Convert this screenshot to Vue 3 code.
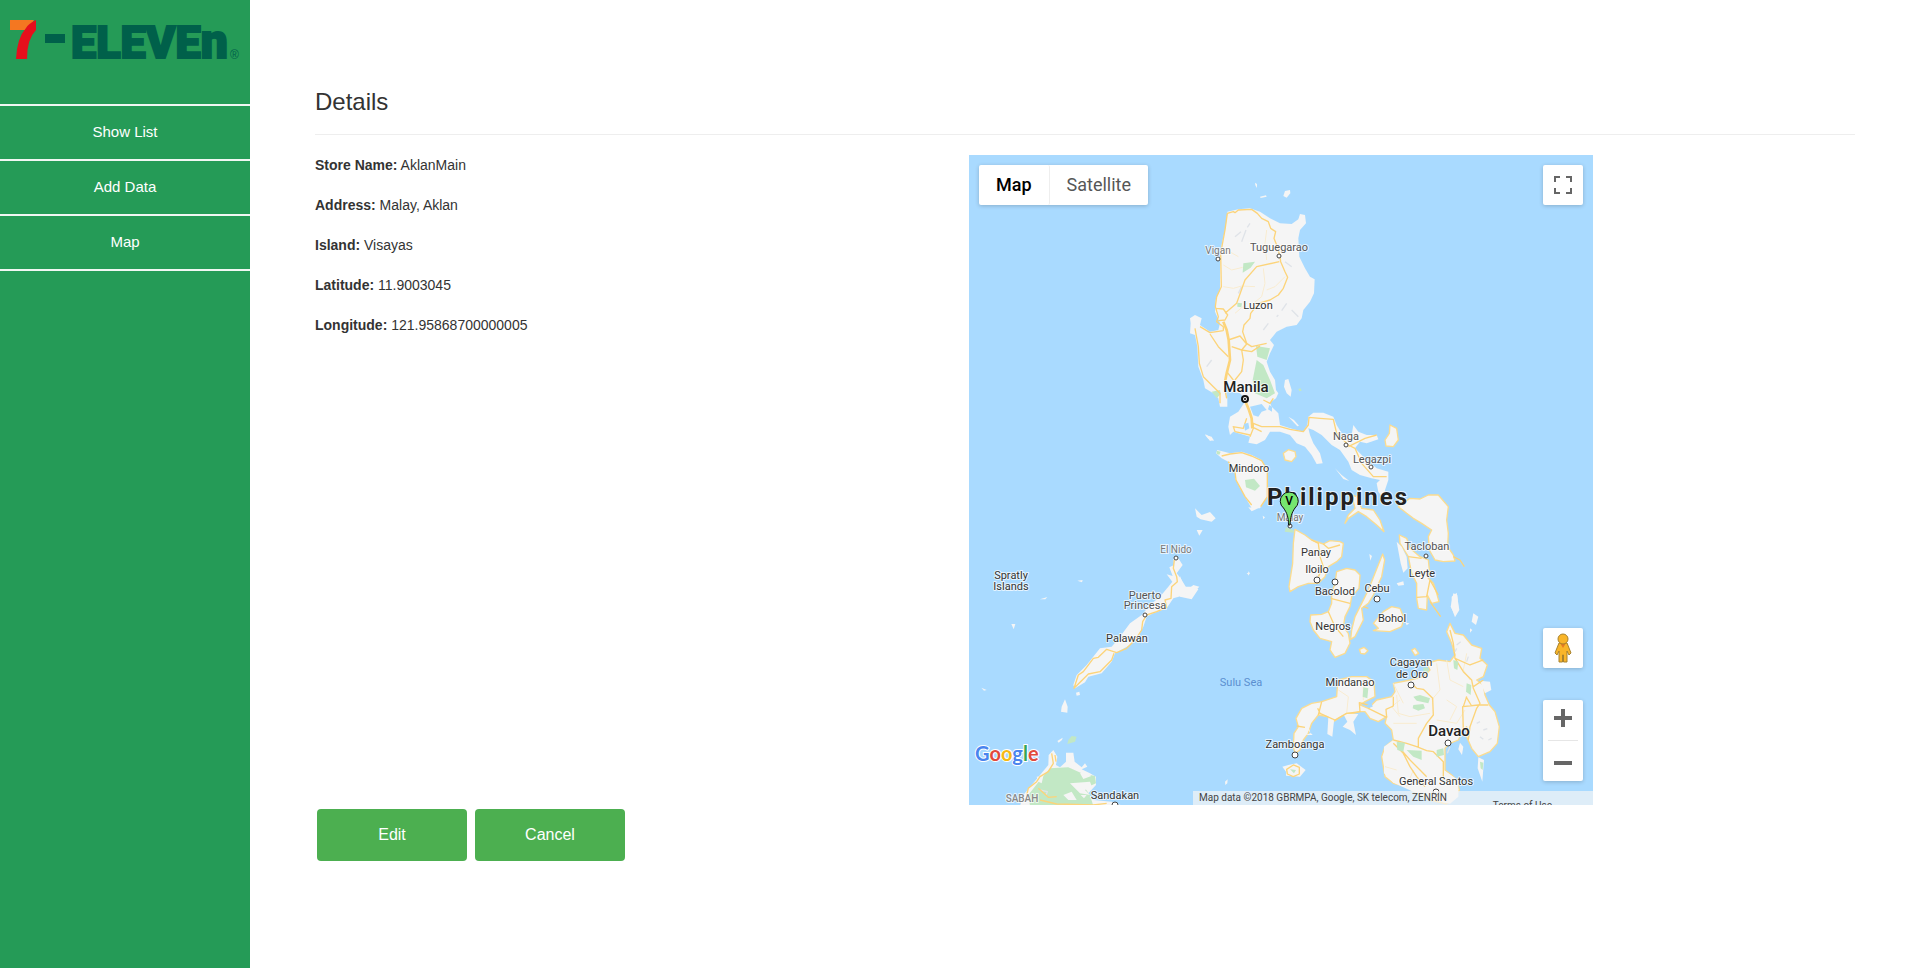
<script setup>
const nav = ['Show List', 'Add Data', 'Map']

const details = [
  ['Store Name:', 'AklanMain'],
  ['Address:', 'Malay, Aklan'],
  ['Island:', 'Visayas'],
  ['Latitude:', '11.9003045'],
  ['Longitude:', '121.95868700000005'],
]

// Place labels: text, centre x, baseline y, style
const labels = [
  ['Vigan', 249, 99, 'minor'],
  ['Tuguegarao', 310, 96, 'town'],
  ['Luzon', 289, 154, 'region'],
  ['Manila', 277, 237, 'city'],
  ['Naga', 377, 285, 'town'],
  ['Legazpi', 403, 308, 'town'],
  ['Mindoro', 280, 317, 'region'],
  ['Malay', 321, 366, 'minor'],
  ['Panay', 347, 401, 'region'],
  ['Iloilo', 348, 418, 'region'],
  ['Bacolod', 366, 440, 'region'],
  ['Cebu', 408, 437, 'region'],
  ['Tacloban', 458, 395, 'town'],
  ['Leyte', 453, 422, 'region'],
  ['Bohol', 423, 467, 'region'],
  ['Negros', 364, 475, 'region'],
  ['Cagayan', 442, 511, 'region'],
  ['de Oro', 443, 523, 'region'],
  ['Mindanao', 381, 531, 'region'],
  ['Davao', 480, 581, 'city'],
  ['Zamboanga', 326, 593, 'region'],
  ['General Santos', 467, 630, 'region'],
  ['Sulu Sea', 272, 531, 'sea'],
  ['El Nido', 207, 398, 'minor'],
  ['Spratly', 42, 424, 'region'],
  ['Islands', 42, 435, 'region'],
  ['Puerto', 176, 444, 'town'],
  ['Princesa', 176, 454, 'town'],
  ['Palawan', 158, 487, 'region'],
  ['SABAH', 53, 647, 'state'],
  ['Sandakan', 146, 644, 'region'],
]

const dots = [
  [249, 104, 2], [310, 101, 2], [377, 290, 2], [402, 312, 2], [321, 371, 2],
  [348, 425, 3], [366, 427, 3], [408, 444, 3], [457, 401, 2], [442, 530, 3],
  [479, 588, 3], [326, 600, 3], [467, 637, 3], [207, 403, 2], [176, 460, 2], [146, 650, 3],
]
</script>

<template>
  <div class="layout">
    <aside class="sidebar">
      <a class="brand" href="#" aria-label="7-Eleven">
        <svg viewBox="0 0 250 104" role="img" aria-hidden="true">
          <path d="M10 20H34L28 30H10Z" fill="#f47721" />
          <path d="M36 20V30Q27 39 27 59H16Q17 38 26 28Q28 24 36 20Z" fill="#e60f1c" />
          <rect x="45" y="34" width="20" height="9" fill="#00604a" />
          <text x="71" y="58" class="wordmark">ELEVE<tspan class="wordmark-n">n</tspan></text>
          <text x="230" y="59" class="reg">®</text>
        </svg>
      </a>
      <nav>
        <a v-for="item in nav" :key="item" href="#" class="nav-link">{{ item }}</a>
      </nav>
    </aside>

    <main class="content">
      <h3>Details</h3>
      <div class="columns">
        <section class="details">
          <p v-for="[name, value] in details" :key="name"><strong>{{ name }}</strong> {{ value }}</p>
        </section>

        <section class="map">
          <svg class="canvas" viewBox="0 0 624 650" preserveAspectRatio="xMidYMid slice" role="img" aria-label="Map of the Philippines">
            <g transform="scale(.33333)">
              <!-- Luzon -->
              <g transform="translate(603 75)">
                <path class="land" d="M172 95L205 88 240 85 270 95 300 115 330 130 365 132 385 118 390 102 405 105 408 130 390 150 385 175 388 230 405 265 420 290 434 298 432 340 420 365 400 390 395 415 380 435 350 440 320 455 300 480 312 495 305 510 300 520 290 545 300 575 315 600 318 630 325 640 318 655 300 668 305 680 325 700 330 735 360 745 400 755 412 735 415 710 430 698 460 698 490 710 500 735 515 760 545 765 550 735 565 755 590 765 620 765 625 778 590 790 570 785 555 805 590 840 620 865 655 875 655 900 645 930 640 955 625 935 620 910 630 900 605 895 570 885 545 870 535 845 510 810 485 795 470 780 455 765 430 750 415 745 420 765 430 790 450 820 458 850 440 852 425 825 405 800 380 790 360 765 330 755 300 755 285 780 260 793 235 788 240 770 190 755 180 765 175 740 180 710 205 695 215 680 228 660 210 640 185 635 175 610 165 625 172 655 172 680 150 680 145 655 130 640 105 625 100 600 85 560 82 500 75 465 60 460 62 430 60 415 75 405 95 415 90 435 120 455 145 450 150 430 135 395 137 360 150 330 150 215 165 150 170 120Z" />
                <path class="land" d="M345 33L360 30 361 40 350 53 340 48ZM270 50L288 46 290 50 272 54ZM255 8L261 12 261 24 256 16ZM345 600L355 597 365 630 362 650 350 640 342 620ZM355 710L372 720 387 737 382 739ZM105 762L120 770 131 780 120 783Z" />
                <path class="green" d="M220 250L255 245 242 263 218 278ZM258 498L300 505 290 540 262 530ZM260 540L280 555 300 600 315 640 290 655 255 640 248 600ZM125 635L150 630 152 642 140 655ZM202 368L216 370 214 382 202 380ZM385 627L392 625 395 632 388 634Z" />
                <path class="shade" d="M195 170L213 155M215 185L228 150M240 130L232 142M350 370L335 392M320 410L325 405M110 560L125 540M365 390L385 410M205 340L215 320M345 245L365 260M280 450L295 430" />
                <path class="minor-road" d="M160 320L190 325 215 318 255 320M290 150L285 190 290 240M280 265L285 310 275 350 250 370M160 255L185 270 218 262M230 370L195 400M345 290L315 320 290 330M170 210L205 230" />
                <path class="road" d="M172 100L190 95 195 98 205 90 245 88 262 100 275 115 295 125 302 145 317 155 312 175 322 200 330 230 332 245 345 275 353 292 340 325 325 345 300 360 265 370 242 400 240 415 222 435 218 455 230 490 245 500 290 490M172 100L165 150 152 220 154 320 140 350 136 380 145 410 140 425 160 440 160 452M328 245L260 260 225 300 200 370 165 400M137 385L160 387 173 405 165 420 145 422M75 445L85 500 88 550 100 590 130 620 150 640 150 670M90 440L120 458 160 452M120 462L145 500 175 530M175 480L210 468 230 492 215 510 220 540 215 575 195 600M185 500L215 510 245 515 270 498M170 575L190 600M170 655L165 630" />
                <path class="highway" d="M160 425L170 450 176 480 180 540 170 580 165 605M228 668L237 690 245 715 247 745" />
                <path class="road" d="M188 740L220 745 230 715M190 740L195 755 240 765M245 740L275 755M240 770L250 745 250 730 275 740 330 740 360 748 400 755 415 735 417 712 450 715 490 718 500 760 535 795 555 805M280 660L300 670 310 655M535 800L585 775 620 765M555 805L575 850 610 890 650 890" />
                <path class="water" d="M240 680L275 672 290 690 275 695 265 710 250 706ZM222 732L235 728 238 745 225 752ZM298 675L306 680 306 695 294 688Z" />
              </g>

              <!-- Mindoro, Samar and the central islands -->
              <g transform="translate(633 735)">
                <path class="land" d="M112 150L150 160 185 155 215 165 245 180 262 210 262 290 240 325 215 325 195 290 180 265 165 235 165 215 155 195 145 185 125 175 108 160Z" />
                <path class="road" d="M125 168L150 162 185 158 215 168 245 182 262 210 262 290 242 320M145 185L165 215 168 240 180 262 195 290 215 315" />
                <path class="green" d="M195 240L222 236 240 258 225 272 198 262ZM110 152L122 155 118 164 110 162Z" />
                <path class="ring" d="M310 160L325 149 345 155 348 170 335 185 315 180ZM630 75L650 85 655 120 640 140 618 138 615 120 628 100Z" />
                <path class="land" d="M45 325L65 345 90 336 107 355 95 365 62 358 50 350ZM75 105L95 110 102 123 85 117ZM465 205L485 225 508 243 490 237ZM248 347L255 352 250 358ZM205 514L210 520 204 527ZM0 528L12 560 45 560 55 568 35 598 0 590ZM205 322L235 325 215 334Z" />
                <path class="ring" d="M515 285L530 290 545 325 580 330 600 360 612 395 590 375 560 350 535 335 505 355 495 370 505 345 525 325Z" />
                <path class="ring" d="M655 320L690 295 720 297 745 285 775 285 805 320 800 360 805 400 803 440 820 465 825 483 790 485 765 480 748 450 745 410 755 390 725 370 700 355 680 340Z" />
                <path class="road" d="M820 470L840 480 853 500" />
              </g>

              <!-- Visayas -->
              <g transform="translate(813 975)">
                <path class="ring" d="M478 165L500 175 510 205 540 230 565 240 568 270 565 295 580 310 590 340 597 365 575 370 562 345 560 390 535 385 530 355 530 310 515 280 505 230 480 190ZM165 148L195 165 215 180 250 192 270 182 300 185 310 190 305 230 290 245 265 260 255 290 235 310 205 310 175 320 150 335 147 320 158 250 160 190ZM290 275L320 265 345 270 360 285 357 325 335 350 330 380 315 410 310 440 325 460 330 490 315 520 285 532 270 510 275 485 240 475 220 450 210 425 212 405 245 403 265 395 275 370 275 340 285 310ZM428 222L434 240 425 290 400 345 385 370 365 385 370 420 345 470 332 478 335 450 345 410 365 370 385 330 405 280ZM400 430L430 395 455 380 480 385 492 415 485 440 450 455 400 452 415 445ZM358 508L372 502 384 512 374 522 362 520ZM515 510L525 505 536 520 525 526Z" />
                <path class="road" d="M215 180L235 190 240 230 250 260 235 290M250 192L265 205 300 195M265 395L285 440 310 470M272 355L330 370M505 230L545 235M530 352L560 350 570 300 595 345M570 365L602 410M370 380L385 385" />
                <path class="land" d="M470 185L485 200 500 230 503 265 490 278 482 250ZM388 222L396 228 391 242ZM20 280L26 278 26 285ZM470 310L490 304 492 315 475 317ZM640 340L652 345 655 380 645 405 632 380ZM497 428L508 430 500 436Z" />
                <path class="land" d="M700 400L715 410 708 435 695 425ZM690 445L697 450 690 458Z" />
                <path class="green" d="M138 142L160 150 162 158 134 155Z" />
              </g>

              <!-- Mindanao -->
              <g transform="translate(843 1275)">
                <path class="ring" d="M600 130L615 160 640 165 665 195 695 205 690 235 712 255 700 290 680 300 700 315 705 345 718 375 735 395 748 440 742 490 720 515 685 530 665 505 650 470 650 440 640 450 625 480 600 490 585 505 585 530 585 570 605 585 620 600 628 630 610 655 590 672 540 660 500 640 470 620 430 610 405 590 400 560 395 530 405 500 430 480 425 450 405 430 410 410 385 425 360 415 345 395 330 395 310 400 290 400 265 415 250 425 232 410 205 405 185 430 175 460 160 480 150 510 135 520 130 500 132 460 145 440 138 415 155 385 185 370 215 365 260 350 262 320 265 300 305 290 350 290 372 305 375 350 345 365 330 375 355 385 380 360 425 350 435 335 430 310 480 300 520 290 540 270 530 250 565 240 600 245 615 225 605 190 590 155Z" />
                <path class="land" d="M235 412L252 422 247 470 232 462ZM280 402L325 402 310 425 318 465 300 450 278 440 292 425ZM690 302L720 305 724 330 705 340ZM402 500L430 480 560 520 580 570 625 600 625 650 600 671 540 658 430 608 402 580ZM175 440L182 460 165 465 188 465 172 448Z" />
                <path class="minor-road" d="M265 330L295 350 290 400M440 345L445 400 480 410 540 400M560 250L570 330 545 360M450 360L425 380 450 410M430 430L500 430M560 420L620 430 645 390M430 310L460 370M650 220L640 270 660 300M590 360L620 380 600 420M340 300L340 360M470 620L490 570M405 560L440 570M590 240L600 300 640 320" />
                <path class="road" d="M203 385L210 400 255 420 290 400 330 395 328 368 355 375M205 405L215 365M140 438L165 442M355 385L410 412 408 388 430 378 430 350M485 312L500 325 520 328 548 355 550 405 530 430 505 475 505 500M430 480L470 490 500 500 530 512 550 515 580 545 580 600M430 490L460 520 480 560 500 590 525 620M450 505L480 540 510 570 530 590M600 150L610 190 615 235 640 275 665 300 670 325 690 370 680 385 660 440 655 480M640 450L638 380 685 375 715 375M648 350L665 378M640 380L650 350M615 235L660 255 700 240M670 320L700 300" />
                <path class="green" d="M490 350L510 345 540 355 535 370 500 362ZM490 375L520 372 525 385 505 392 488 385ZM440 485L465 488 460 515 442 510ZM470 510L515 512 515 540 490 530ZM560 510L580 505 582 525 560 530ZM650 310L664 315 662 345 648 335ZM610 240L625 245 622 270 612 265ZM340 322L355 325 352 355 338 350ZM520 262L535 265 535 275 520 275Z" />
                <path class="shade" d="M620 195L632 185M655 230L650 245M615 215L620 205M680 430L690 425M700 450L712 446M715 480L725 475M690 470L700 478M600 500L592 520" />
                <path class="land" d="M630 488L640 500 636 525 625 508ZM685 532L702 540 697 605 683 565ZM605 50L620 38 628 90 615 112 605 85ZM97 560L115 555 140 550 167 570 150 590 108 587 108 575Z" />
                <path class="road" d="M110 568L130 555 148 562 148 582 130 590 112 582Z" />
                <path class="green" d="M120 568L138 570 132 580ZM690 545L700 548 698 570 692 565Z" />
                <path class="water" d="M350 375L365 370 368 380 355 384Z" />
              </g>

              <!-- Palawan and the Spratlys -->
              <g transform="translate(-27 1125)">
                <path class="land" d="M640 85L655 85 668 105 650 130 662 145 680 175 675 195 640 205 620 235 580 250 560 260 550 290 535 320 510 345 465 370 455 395 425 430 385 440 375 457 345 475 340 465 350 435 380 405 420 355 455 350 480 320 510 280 545 255 570 225 600 200 625 170 637 155 620 133 638 138 628 112 642 105Z" />
                <path class="road" d="M643 90L640 115 650 140 652 155 635 170 633 205 615 210 620 232 590 245 560 255 548 275 545 300 525 330 500 355 470 368 440 358 415 382 400 385 370 425 355 435 342 475 385 432 420 425 455 390 462 370" />
                <path class="land" d="M688 175L700 165 718 170 700 188ZM315 508L323 530 322 548 303 545 305 530ZM348 488L358 485 360 495 350 497ZM352 152L368 150 366 157ZM240 208L262 201 256 208ZM154 282L166 282 161 298ZM64 473L80 480 72 482ZM710 0L728 0 718 17Z" />
              </g>

              <!-- Borneo -->
              <g transform="translate(-27 1575)">
                <path class="land" d="M180 378L190 345 240 285 265 255 266 225 280 210 292 230 288 255 300 262 318 245 318 218 340 218 344 245 365 262 375 250 382 260 365 268 390 280 408 290 408 315 385 340 400 360 455 365 490 378ZM292 183L308 173 306 180 296 188ZM795 305L803 298 802 310 796 315Z" />
                <path class="green" d="M205 345L240 300 270 265 325 262 365 280 405 288 408 310 375 325 390 345 400 378 210 378ZM325 180L335 168 350 170 345 185 322 192Z" />
                <path class="land" d="M360 280L380 276 394 288 370 297ZM330 310L390 305 395 318 375 330 390 345 360 340ZM230 290L250 288 245 310 235 305ZM310 345L335 335 350 360 325 360ZM362 345L380 345 372 355Z" />
                <path class="shade" d="M240 330L262 335 258 345" />
                <path class="road" d="M275 220L280 250 265 275 240 290 230 305 205 325 200 345M285 225L288 245M235 325L265 352 290 350M240 360L290 372 400 375 440 370" />
              </g>
            </g>

            <circle v-for="[x, y, r] in dots" :key="x + '-' + y" :cx="x" :cy="y" :r="r" class="dot" />
            <circle cx="276" cy="244" r="3" class="capital" />
            <circle cx="276" cy="244" r="1" />
            <text v-for="[name, x, y, kind] in labels" :key="name" :x="x" :y="y" class="label" :class="kind">{{ name }}</text>
            <text x="369" y="350" class="label country">Philippines</text>

            <path d="M319.500 370C319.500 362 318 358 314.500 353A9 9 0 1 1 326 353C322.500 358 321.500 362 321 370Z" class="pin" />
            <text x="320" y="350" class="pin-letter">V</text>

            <text x="6" y="606" class="google"><tspan fill="#4a84ee">G</tspan><tspan fill="#e14a3c">o</tspan><tspan fill="#f5ba15">o</tspan><tspan fill="#4a84ee">g</tspan><tspan fill="#36a655">l</tspan><tspan fill="#e14a3c">e</tspan></text>
          </svg>

          <div class="map-type">
            <button type="button" class="active">Map</button>
            <button type="button">Satellite</button>
          </div>

          <button type="button" class="control fullscreen" aria-label="Toggle fullscreen view">
            <svg viewBox="0 0 18 18" width="18" height="18"><path d="M1 6V1H6M12 1H17V6M17 12V17H12M6 17H1V12" fill="none" stroke="#666" stroke-width="2" /></svg>
          </button>

          <button type="button" class="control pegman" aria-label="Street View">
            <svg viewBox="0 0 18 30" width="18" height="30">
              <path d="M5 10H13L17 20 15 22 13 18V29H9.500V22H8.500V29H5V18L3 22 1 20Z" fill="#f9b529" stroke="#a8822d" />
              <path d="M6 10H12L9 15Z" fill="#e57a23" />
              <circle cx="9" cy="6" r="5" fill="#f9b529" stroke="#a8822d" />
            </svg>
          </button>

          <div class="zoom">
            <button type="button" aria-label="Zoom in">
              <svg viewBox="0 0 18 18" width="18" height="18"><path d="M9 0V18M0 9H18" stroke="#666" stroke-width="4" /></svg>
            </button>
            <button type="button" aria-label="Zoom out">
              <svg viewBox="0 0 18 18" width="18" height="18"><path d="M0 9H18" stroke="#666" stroke-width="4" /></svg>
            </button>
          </div>

          <div class="credits">
            <span>Map data ©2018 GBRMPA, Google, SK telecom, ZENRIN</span>
            <a href="#">Terms of Use</a>
          </div>
        </section>
      </div>

      <div class="actions">
        <button type="button">Edit</button>
        <button type="button">Cancel</button>
      </div>
    </main>
  </div>
</template>

<style>
body {
  margin: 0;
  background: #fff;
}
</style>

<style scoped>
.layout {
  display: flex;
  min-height: 100vh;
  font-family: "Liberation Sans", Arial, sans-serif;
  font-size: 14px;
  line-height: 20px;
  color: #333;
}
.sidebar {
  flex: 0 0 250px;
  background: #259b57;
}
.brand {
  display: block;
  height: 104px;
}
.brand svg {
  display: block;
  width: 100%;
}
.wordmark {
  font-family: Roboto, sans-serif;
  font-size: 45px;
  font-weight: 900;
  fill: #00604a;
  stroke: #00604a;
  stroke-width: 2px;
}
.wordmark-n {
  font-size: 48px;
}
.reg {
  font-size: 12px;
  fill: #00604a;
}
nav {
  border-top: 2px solid #f1f7f3;
}
.nav-link {
  display: block;
  height: 53px;
  border-bottom: 2px solid #f1f7f3;
  color: #fff;
  font-size: 15px;
  line-height: 52px;
  text-align: center;
  text-decoration: none;
}
.content {
  flex: 1;
  min-width: 0;
  padding: 82px 63px 40px 65px;
}
h3 {
  margin: 0 0 20px;
  padding-bottom: 12px;
  border-bottom: 1px solid #eee;
  font-size: 24px;
  line-height: 40px;
  font-weight: 400;
}
.columns {
  display: grid;
  grid-template-columns: 654fr 624fr 262fr;
}
.details p {
  margin: 0 0 20px;
}
.map {
  position: relative;
  height: 650px;
  overflow: hidden;
  background: #a9daff;
  font-family: Roboto, sans-serif;
}
.canvas {
  display: block;
  width: 100%;
  height: 100%;
}
.land {
  fill: #f5f5f5;
}
.ring {
  fill: #f5f5f5;
  stroke: #fbdc90;
  stroke-width: 4;
  stroke-linejoin: round;
}
.green {
  fill: #c2e8c5;
}
.water {
  fill: #a9daff;
}
.road,
.highway,
.minor-road,
.shade {
  fill: none;
  stroke: #fcd47a;
  stroke-width: 4;
  stroke-linejoin: round;
}
.highway {
  stroke-width: 8;
}
.minor-road {
  stroke: #f9ecd0;
  stroke-width: 3;
}
.shade {
  stroke: #dfe3e8;
}
.dot {
  fill: #fff;
  stroke: #444;
}
.capital {
  fill: #fff;
  stroke: #111;
  stroke-width: 2;
}
.label {
  font-size: 11px;
  text-anchor: middle;
  fill: #333;
  stroke: #fff;
  stroke-width: 2px;
  stroke-opacity: 0.7;
  stroke-linejoin: round;
  paint-order: stroke;
}
.town {
  fill: #555;
}
.minor {
  font-size: 10px;
  fill: #777;
}
.state {
  font-size: 10px;
  font-weight: 500;
  fill: #888;
}
.sea {
  fill: #5b8fd0;
  stroke: none;
}
.city {
  font-size: 15px;
  font-weight: 500;
  fill: #222;
}
.country {
  font-size: 24px;
  font-weight: 700;
  letter-spacing: 2px;
  fill: #222;
}
.pin {
  fill: #76e66f;
  stroke: #111;
}
.pin-letter {
  font-size: 12px;
  font-weight: 500;
  text-anchor: middle;
}
.google {
  font-family: Lato, sans-serif;
  font-size: 20px;
  font-weight: 700;
  stroke: #fff;
  stroke-width: 2px;
  paint-order: stroke;
}
button {
  margin: 0;
  padding: 0;
  border: 0;
  font-family: inherit;
  cursor: pointer;
}
.map-type,
.control,
.zoom {
  position: absolute;
  border-radius: 2px;
  background: #fff;
  box-shadow: 0 1px 4px rgba(0, 0, 0, 0.2);
}
.map-type {
  top: 10px;
  left: 10px;
  display: flex;
}
.map-type button {
  height: 40px;
  padding: 0 17px 2px;
  border-radius: 2px;
  background: none;
  color: #565656;
  font-size: 18px;
}
.map-type .active {
  border-right: 1px solid #eee;
  color: #000;
  font-weight: 500;
}
.control {
  right: 10px;
  display: grid;
  place-items: center;
  width: 40px;
  height: 40px;
}
.fullscreen {
  top: 10px;
}
.pegman {
  bottom: 137px;
}
.zoom {
  right: 10px;
  bottom: 24px;
  width: 40px;
}
.zoom button {
  display: grid;
  place-items: center;
  width: 100%;
  height: 40px;
  background: none;
}
.zoom button + button {
  height: 41px;
  background: linear-gradient(#e6e6e6, #e6e6e6) center top / 30px 1px no-repeat;
}
.zoom button + button svg {
  margin-top: 4px;
}
.zoom button:first-child svg {
  margin-top: -4px;
}
.credits {
  position: absolute;
  right: 0;
  bottom: 0;
  display: flex;
  justify-content: space-between;
  box-sizing: border-box;
  width: 400px;
  height: 14px;
  padding: 0 41px 0 6px;
  overflow: hidden;
  background: rgba(245, 245, 245, 0.7);
  color: #444;
  font-size: 10px;
  line-height: 14px;
}
.credits a {
  padding-top: 8px;
  color: #444;
  text-decoration: none;
}
.actions {
  display: flex;
  gap: 8px;
  padding: 4px 2px;
}
.actions button {
  width: 150px;
  height: 52px;
  border-radius: 4px;
  background: #4caf50;
  color: #fff;
  font-size: 16px;
}
</style>
